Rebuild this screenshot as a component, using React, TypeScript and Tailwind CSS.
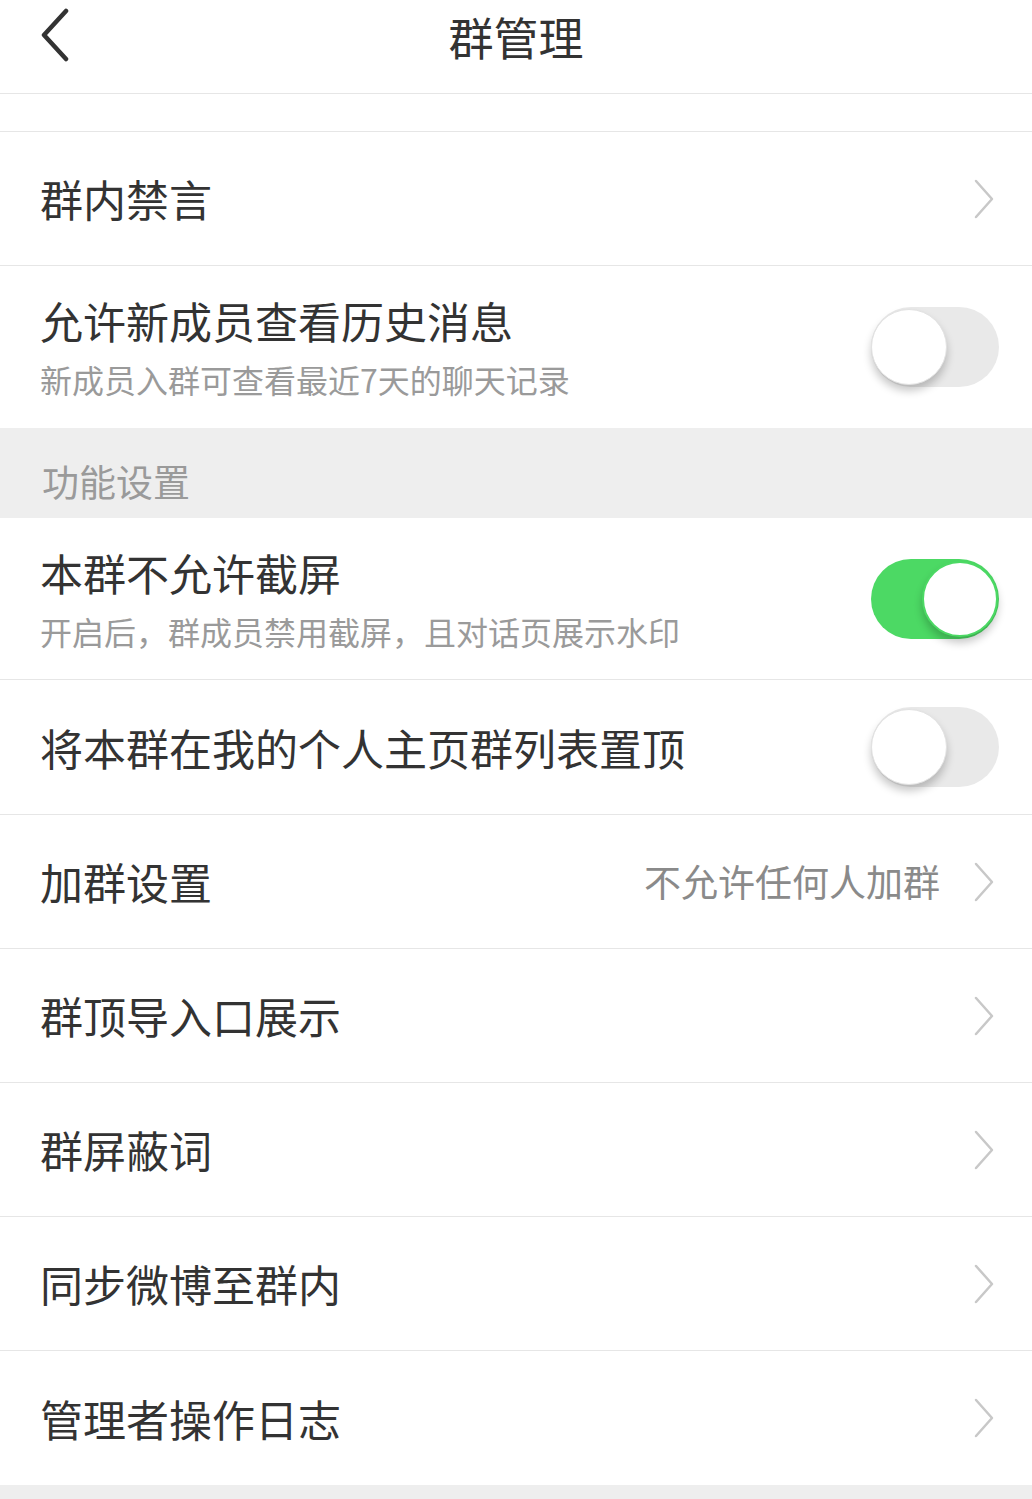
import { useState } from "react";

const FONT = { fontFamily: '"Noto Sans CJK SC", "Noto Sans", sans-serif' };

function Chevron() {
  return (
    <svg width="24" height="40" viewBox="0 0 24 40" className="shrink-0">
      <path d="M4 2 L20 20 L4 38" fill="none" stroke="#c8c8c8" strokeWidth="2.5" strokeLinecap="round" strokeLinejoin="round" />
    </svg>
  );
}

function Toggle({ on, onClick }: { on: boolean; onClick: () => void }) {
  return (
    <button
      type="button"
      onClick={onClick}
      className={`relative w-[128px] h-[80px] rounded-full shrink-0 ${on ? "bg-[#4cd964]" : "bg-[#e9e9e9]"}`}
    >
      <span
        className={`absolute top-[2px] w-[76px] h-[76px] rounded-full bg-white shadow-[0_6px_8px_rgba(0,0,0,0.22)] ${
          on ? "right-[1px] border-[2px] border-[#4cd964]" : "left-0 border border-[#e2e2e2]"
        }`}
      />
    </button>
  );
}

function LinkRow({ title, value }: { title: string; value?: string }) {
  return (
    <div className="h-[134px] flex items-center pl-[40px] pr-[36px] border-b border-[#e6e6e6]">
      <span className="flex-1 text-[43px] text-[#333333] leading-none">{title}</span>
      {value && <span className="text-[37px] text-[#8a8a8a] mr-[32px] leading-none">{value}</span>}
      <Chevron />
    </div>
  );
}

export default function App() {
  const [history, setHistory] = useState(false);
  const [noShot, setNoShot] = useState(true);
  const [pin, setPin] = useState(false);

  return (
    <div className="w-[1032px] h-[1499px] bg-[#eeeeee] overflow-hidden" style={FONT}>
      <div className="bg-white">
        {/* header */}
        <div className="relative h-[94px] flex items-center justify-center border-b border-[#e6e6e6]">
          <svg width="34" height="54" viewBox="0 0 34 54" className="absolute left-[38px] top-[8px]">
            <path d="M28 3 L6 27 L28 51" fill="none" stroke="#333333" strokeWidth="4.5" strokeLinecap="round" strokeLinejoin="round" />
          </svg>
          <span className="text-[45px] text-[#333333] leading-none -mt-[20px]">群管理</span>
        </div>
        <div className="h-[38px] border-b border-[#e6e6e6]" />

        <LinkRow title="群内禁言" />

        <div className="h-[162px] flex items-center pl-[40px] pr-[33px]">
          <div className="flex-1 flex flex-col gap-[21px]">
            <span className="text-[43px] text-[#333333] leading-none">允许新成员查看历史消息</span>
            <span className="text-[32px] text-[#9a9a9a] leading-none">新成员入群可查看最近7天的聊天记录</span>
          </div>
          <Toggle on={history} onClick={() => setHistory(!history)} />
        </div>
      </div>

      <div className="h-[90px] flex items-center pl-[42px] pt-[16px]">
        <span className="text-[37px] text-[#9a9a9a] leading-none">功能设置</span>
      </div>

      <div className="bg-white">
        <div className="h-[162px] flex items-center pl-[40px] pr-[33px] border-b border-[#e6e6e6]">
          <div className="flex-1 flex flex-col gap-[21px]">
            <span className="text-[43px] text-[#333333] leading-none">本群不允许截屏</span>
            <span className="text-[32px] text-[#9a9a9a] leading-none">开启后，群成员禁用截屏，且对话页展示水印</span>
          </div>
          <Toggle on={noShot} onClick={() => setNoShot(!noShot)} />
        </div>

        <div className="h-[135px] flex items-center pl-[40px] pr-[33px] border-b border-[#e6e6e6]">
          <span className="flex-1 text-[43px] text-[#333333] leading-none">将本群在我的个人主页群列表置顶</span>
          <Toggle on={pin} onClick={() => setPin(!pin)} />
        </div>

        <LinkRow title="加群设置" value="不允许任何人加群" />
        <LinkRow title="群顶导入口展示" />
        <LinkRow title="群屏蔽词" />
        <LinkRow title="同步微博至群内" />
        <div className="h-[134px] flex items-center pl-[40px] pr-[36px]">
          <span className="flex-1 text-[43px] text-[#333333] leading-none">管理者操作日志</span>
          <Chevron />
        </div>
      </div>
    </div>
  );
}
